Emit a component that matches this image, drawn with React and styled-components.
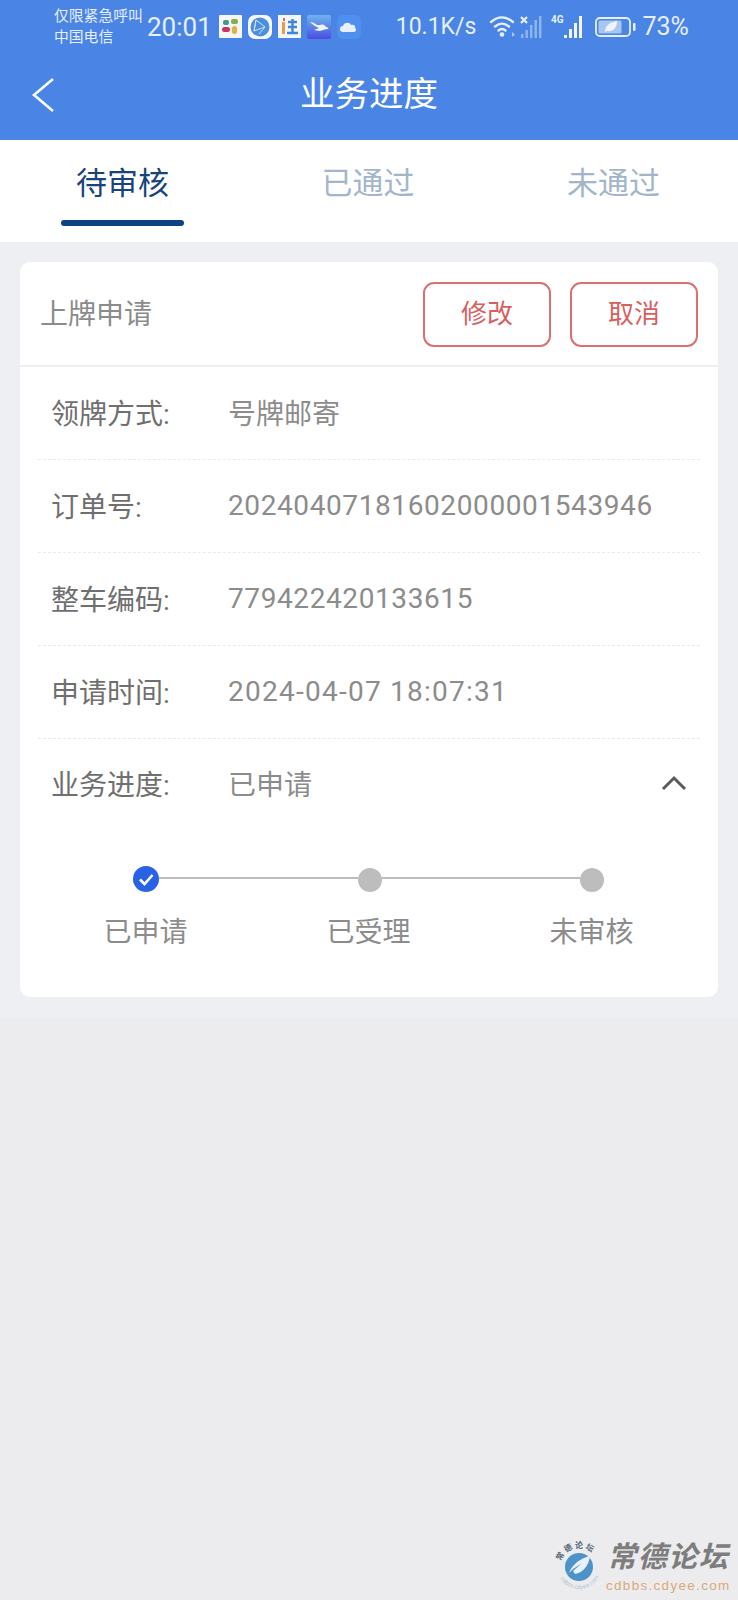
import styled, { createGlobalStyle } from "styled-components";

const CJK = `Roboto, "Noto Sans CJK SC", sans-serif`;

const GlobalStyle = createGlobalStyle`
  html, body { margin: 0; padding: 0; background: #ececee; }
  * { box-sizing: border-box; }
`;

const Page = styled.div`
  position: relative;
  width: 738px;
  height: 1600px;
  overflow: hidden;
  background: #ececee;
  font-family: ${CJK};
`;

const Header = styled.header`
  height: 140px;
  background: #4a85e5;
  color: #fff;
`;

const StatusBar = styled.div`
  display: flex;
  align-items: center;
  height: 53px;
  padding: 0 0 0 54px;
  color: #e6effc;
`;

const Carrier = styled.div`
  width: 93px;
  font-size: 14.8px;
  line-height: 21px;
  white-space: nowrap;
`;

const StatusText = styled.span`
  font-size: ${(p) => p.$size || 26}px;
  margin-left: ${(p) => p.$left || 0}px;
  white-space: nowrap;
`;

const AppIcons = styled.div`
  display: flex;
  align-items: center;
  gap: 6px;
  margin-left: 7px;
`;

const StatusIcons = styled.div`
  display: flex;
  align-items: center;
  margin-left: 13px;
`;

const IconGap = styled.span`
  width: ${(p) => p.$width}px;
`;

const NavBar = styled.div`
  display: flex;
  align-items: center;
  justify-content: center;
  position: relative;
  height: 81px;
  padding-bottom: 6px;
`;

const BackIcon = styled.svg`
  position: absolute;
  left: 31px;
  top: 24px;
`;

const NavTitle = styled.h1`
  margin: 0;
  font-size: 34.5px;
  font-weight: 400;
  color: #fff;
`;

const Tabs = styled.nav`
  display: grid;
  grid-template-columns: repeat(3, 123px);
  column-gap: 122.500px;
  height: 102px;
  padding-left: 61px;
  background: #fff;
`;

const Tab = styled.div`
  display: flex;
  flex-direction: column;
  align-items: center;
  font-size: 31px;
  line-height: 46px;
  padding-top: 21px;
  color: ${(p) => (p.$active ? "#17457a" : "#a3b6c9")};
  &::after {
    content: "";
    display: ${(p) => (p.$active ? "block" : "none")};
    width: 123px;
    height: 6px;
    margin-top: 13px;
    border-radius: 3px;
    background: #0e4182;
  }
`;

const Body = styled.main`
  padding: 20px 20px 21px;
  background: #eeeff2;
`;

const Card = styled.section`
  height: 735px;
  background: #fff;
  border-radius: 10px;
`;

const CardHead = styled.div`
  display: flex;
  align-items: center;
  height: 105px;
  padding: 2px 20px 0 20px;
  border-bottom: 2px solid #eeeff1;
`;

const CardTitle = styled.div`
  flex: 1;
  padding-bottom: 6px;
  font-size: 28px;
  color: #8b8b8b;
`;

const OutlineButton = styled.button`
  width: 128px;
  height: 65px;
  margin-left: 19px;
  padding: 0 0 6px;
  border: 2px solid #db7070;
  border-radius: 11px;
  background: #fff;
  color: #d85f5f;
  font-family: ${CJK};
  font-size: 26px;
`;

const Rows = styled.div`
  padding: 0 18px;
`;

const Row = styled.div`
  display: flex;
  align-items: center;
  height: ${(p) => (p.$last ? 90 : 93)}px;
  padding: 0 13px 2px;
  border-bottom: ${(p) => (p.$last ? "none" : "1.5px dashed #e8eaee")};
`;

const Label = styled.div`
  width: 177px;
  font-size: 28px;
  color: #6f6f6f;
  white-space: nowrap;
`;

const Value = styled.div`
  flex: 1;
  font-size: 28px;
  color: #8c8c8c;
  letter-spacing: ${(p) => p.$spacing || 0}px;
  white-space: nowrap;
`;

const Track = styled.div`
  display: flex;
  align-items: center;
  height: 28px;
  margin: 36px 114px 0 113px;
`;

const DoneDot = styled.svg`
  flex: none;
`;

const GreyDot = styled.span`
  flex: none;
  width: 24px;
  height: 24px;
  margin-top: 2px;
  border-radius: 50%;
  background: #bdbdbd;
`;

const TrackLine = styled.span`
  flex: 1;
  height: 2px;
  margin-top: -2px;
  background: #bdbdbd;
`;

const StepLabels = styled.div`
  display: grid;
  grid-template-columns: repeat(3, 223px);
  margin: 19px 0 0 14px;
`;

const StepLabel = styled.div`
  text-align: center;
  font-size: 28px;
  line-height: 42px;
  color: #8c8c8c;
`;

const Watermark = styled.div`
  position: absolute;
  left: 554px;
  top: 1536px;
  display: flex;
  align-items: center;
  gap: 2px;
`;

const MarkText = styled.div`
  display: flex;
  flex-direction: column;
  align-items: center;
`;

const MarkTitle = styled.div`
  font-family: "Noto Sans CJK SC", sans-serif;
  font-weight: 700;
  font-style: italic;
  font-size: 29px;
  line-height: 36px;
  letter-spacing: 1.500px;
  color: #7d7d7d;
`;

const MarkUrl = styled.div`
  margin-top: 6px;
  font-family: "Liberation Sans", sans-serif;
  font-size: 13.5px;
  line-height: 15px;
  letter-spacing: 1.300px;
  color: #dba877;
`;

const SlackTile = () => (
  <svg width="23" height="23" viewBox="0 0 23 23">
    <rect width="23" height="23" rx="1" fill="#f4f6f8" />
    <rect x="4" y="5" width="6" height="5" rx="2" fill="#3f9a8c" />
    <rect x="12" y="4" width="7" height="5" rx="2" fill="#7fb24a" />
    <rect x="3" y="12" width="8" height="5" rx="2.5" fill="#c8335f" />
    <rect x="13" y="11" width="5" height="8" rx="2.5" fill="#e3b23c" />
  </svg>
);

const GlobeTile = () => (
  <svg width="24" height="24" viewBox="0 0 24 24">
    <rect width="24" height="24" rx="7" fill="#f6f8fb" />
    <circle cx="12" cy="12" r="9.5" fill="#4d8fdc" />
    <path d="M8 5l9 7-11 4zM8 5l-2 11M17 12l-6 7" fill="none" stroke="#cfe2f8" strokeWidth="1" />
  </svg>
);

const JiaTile = () => (
  <svg width="23" height="23" viewBox="0 0 23 23">
    <rect width="23" height="23" fill="#f5f6f8" />
    <rect x="4" y="7" width="3" height="12" fill="#ee9a4c" />
    <rect x="5" y="3" width="2" height="3" fill="#e5674a" />
    <path d="M10 7h9M10 12h9M9 18h11M14.5 4v14" stroke="#3f86d8" strokeWidth="2.4" fill="none" />
  </svg>
);

const CloudTile = () => (
  <svg width="24" height="24" viewBox="0 0 24 24">
    <defs>
      <linearGradient id="tileFill" x1="0" y1="0" x2="0" y2="1">
        <stop offset="0" stopColor="#6fb4ec" />
        <stop offset="1" stopColor="#4a4fe0" />
      </linearGradient>
    </defs>
    <rect width="24" height="24" rx="2" fill="url(#tileFill)" />
    <path d="M3 7c5 0 6 4 10 3 3-1 5 0 6 2 2 0 3 1 2 2-3 0-5 1-8 2-3 0-4-1-6-1l5-2C9 12 6 10 3 7z" fill="#eef4fc" />
  </svg>
);

const WeatherTile = () => (
  <svg width="24" height="24" viewBox="0 0 24 24">
    <rect width="24" height="24" rx="6" fill="#4f8ff0" />
    <path d="M6 17a3 3 0 010-6c1-4 7-4 8-1 3-1 5 1 4 3 2 1 1 4-1 4z" fill="#e8f0fb" />
  </svg>
);

const Wifi = () => (
  <svg width="30" height="25" viewBox="0 0 30 25">
    <g fill="none" stroke="#e6effc" strokeWidth="2.4" strokeLinecap="round">
      <path d="M2 8c7-6 15-6 22 0" />
      <path d="M6 12.5c4.500-3.700 9.500-3.700 14 0" />
      <path d="M9.500 16.500c2.500-2 4.500-2 7 0" />
    </g>
    <circle cx="13" cy="20.500" r="2.300" fill="#e6effc" />
    <path d="M23 18l3 2.500-3 2.500z" fill="#a9c8f2" />
  </svg>
);

const SimOff = () => (
  <svg width="24" height="25" viewBox="0 0 24 25">
    <path d="M2 3l6 6M8 3l-6 6" stroke="#e6effc" strokeWidth="2.200" />
    <g fill="#8fb5ee">
      <rect x="2" y="20" width="2.400" height="4" />
      <rect x="6.500" y="16" width="2.400" height="8" />
      <rect x="11" y="11" width="2.400" height="13" />
      <rect x="15.500" y="6" width="2.400" height="18" />
      <rect x="20" y="2" width="2.400" height="22" />
    </g>
  </svg>
);

const SimOn = () => (
  <svg width="34" height="25" viewBox="0 0 34 25">
    <text x="0" y="9" fontSize="10" fontWeight="700" fontFamily="Roboto, sans-serif" fill="#e6effc">4G</text>
    <g fill="#f0f5fd">
      <rect x="13" y="21" width="3" height="3" />
      <rect x="18" y="15" width="3" height="9" />
      <rect x="23" y="9" width="3" height="15" />
      <rect x="28" y="2" width="3" height="22" />
    </g>
  </svg>
);

const Battery = () => (
  <svg width="41" height="22" viewBox="0 0 41 22">
    <rect x="1" y="2" width="34" height="18" rx="4" fill="none" stroke="#e6effc" strokeWidth="1.800" />
    <rect x="3.500" y="4.500" width="23" height="13" rx="1.500" fill="#a9c6f1" />
    <path d="M10 16c0-7 6-10 12-11 0 7-4 11-10 10z" fill="#eef4fc" />
    <rect x="38" y="7" width="2.500" height="8" rx="1" fill="#e6effc" />
  </svg>
);

const ForumLogo = () => (
  <svg width="50" height="50" viewBox="0 0 50 50">
    <defs>
      <path id="ringTop" d="M6 27a19 19 0 0138 0" />
      <path id="ringBottom" d="M3 27a22 22 0 0044 0" />
    </defs>
    <circle cx="25" cy="27" r="14" fill="#4d93c9" />
    <path d="M15 33c3-8 11-15 21-17-1 9-7 17-15 18l-2-3 9-8-9 6z" fill="#e8f1f8" />
    <text fontSize="8" fontWeight="700" fill="#55677a" fontFamily="'Noto Sans CJK SC', sans-serif">
      <textPath href="#ringTop" startOffset="6">常 德 论 坛</textPath>
    </text>
    <text fontSize="6" fill="#b9c4cf" fontFamily="'Liberation Sans', sans-serif">
      <textPath href="#ringBottom" startOffset="12">cdbbs.cdyee.com</textPath>
    </text>
  </svg>
);

const rows = [
  { label: "领牌方式:", value: "号牌邮寄" },
  { label: "订单号:", value: "20240407181602000001543946", spacing: 0.6 },
  { label: "整车编码:", value: "779422420133615", spacing: 0.6 },
  { label: "申请时间:", value: "2024-04-07 18:07:31", spacing: 1.25 },
];

const App = () => (
  <Page>
    <GlobalStyle />
    <Header>
      <StatusBar>
        <Carrier>
          <div>仅限紧急呼叫</div>
          <div>中国电信</div>
        </Carrier>
        <StatusText>20:01</StatusText>
        <AppIcons>
          <SlackTile />
          <GlobeTile />
          <JiaTile />
          <CloudTile />
          <WeatherTile />
        </AppIcons>
        <StatusText $size={23} $left={35}>10.1K/s</StatusText>
        <StatusIcons>
          <Wifi />
          <SimOff />
          <IconGap $width={8} />
          <SimOn />
          <IconGap $width={10} />
          <Battery />
        </StatusIcons>
        <StatusText $size={25} $left={6}>73%</StatusText>
      </StatusBar>
      <NavBar>
        <BackIcon width="24" height="36" viewBox="0 0 24 36">
          <path d="M22 2L3 18l19 16" fill="none" stroke="#fff" strokeWidth="2.600" />
        </BackIcon>
        <NavTitle>业务进度</NavTitle>
      </NavBar>
    </Header>
    <Tabs>
      <Tab $active>待审核</Tab>
      <Tab>已通过</Tab>
      <Tab>未通过</Tab>
    </Tabs>
    <Body>
      <Card>
        <CardHead>
          <CardTitle>上牌申请</CardTitle>
          <OutlineButton>修改</OutlineButton>
          <OutlineButton>取消</OutlineButton>
        </CardHead>
        <Rows>
          {rows.map((r) => (
            <Row key={r.label}>
              <Label>{r.label}</Label>
              <Value $spacing={r.spacing}>{r.value}</Value>
            </Row>
          ))}
          <Row $last>
            <Label>业务进度:</Label>
            <Value>已申请</Value>
            <svg width="26" height="16" viewBox="0 0 26 16">
              <path d="M2 14L13 3l11 11" fill="none" stroke="#5c5c5c" strokeWidth="3" />
            </svg>
          </Row>
        </Rows>
        <Track>
          <DoneDot width="26" height="26" viewBox="0 0 26 26">
            <circle cx="13" cy="13" r="13" fill="#2a62e6" />
            <path d="M7 13.500l4.500 4.500L19.500 9" fill="none" stroke="#fff" strokeWidth="2.600" />
          </DoneDot>
          <TrackLine />
          <GreyDot />
          <TrackLine />
          <GreyDot />
        </Track>
        <StepLabels>
          <StepLabel>已申请</StepLabel>
          <StepLabel>已受理</StepLabel>
          <StepLabel>未审核</StepLabel>
        </StepLabels>
      </Card>
    </Body>
    <Watermark>
      <ForumLogo />
      <MarkText>
        <MarkTitle>常德论坛</MarkTitle>
        <MarkUrl>cdbbs.cdyee.com</MarkUrl>
      </MarkText>
    </Watermark>
  </Page>
);

export default App;
